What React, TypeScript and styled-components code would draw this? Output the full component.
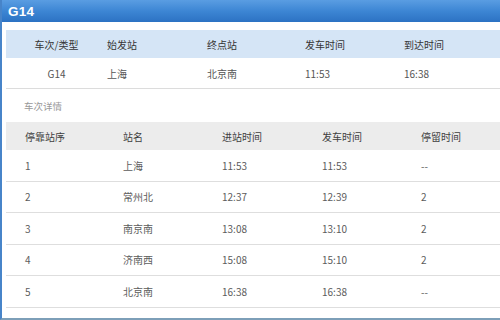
import React from 'react'
import styled, { createGlobalStyle } from 'styled-components'

const GlobalStyle = createGlobalStyle`
  html, body {
    margin: 0;
    padding: 0;
    background: #ffffff;
    overflow: hidden;
  }
  body {
    font-family: "Noto Sans CJK SC", "Noto Sans", sans-serif;
  }
`

const Panel = styled.div`
  width: 510px;
  height: 320px;
  box-sizing: border-box;
  border-left: 2px solid #4784c9;
  border-bottom: 2px solid #7d9fb8;
  display: flex;
  flex-direction: column;
`

const TitleBar = styled.div`
  height: 22px;
  display: flex;
  align-items: center;
  padding-left: 6px;
  background: linear-gradient(to bottom, #5a9de2 0%, #3d86d4 50%, #2c72c3 100%);
  color: #ffffff;
  font-family: "Liberation Sans", "DejaVu Sans", sans-serif;
  font-weight: 700;
  font-size: 13.5px;
  letter-spacing: 0.3px;
`

const Body = styled.div`
  padding: 8px 0 0 4px;
  flex: 1;
`

const SummaryRow = styled.div<{ $head?: boolean }>`
  display: grid;
  grid-template-columns: 101px 100px 98px 99px 1fr;
  align-items: center;
  box-sizing: border-box;
  height: ${p => (p.$head ? '28px' : '31px')};
  background: ${p => (p.$head ? '#d5e5f6' : '#ffffff')};
  border-bottom: ${p => (p.$head ? 'none' : '1px solid #dcdcdc')};
  font-size: 10px;
  color: ${p => (p.$head ? '#353535' : '#555555')};
`

const Cell = styled.span<{ $center?: boolean }>`
  text-align: ${p => (p.$center ? 'center' : 'left')};
  white-space: nowrap;
`

const SectionLabel = styled.div`
  font-size: 9.5px;
  color: #999999;
  padding: 10px 0 0 18px;
  height: 22px;
  box-sizing: border-box;
`

const DetailRow = styled.div<{ $head?: boolean }>`
  display: grid;
  grid-template-columns: 98px 99px 100px 99px 1fr;
  align-items: center;
  box-sizing: border-box;
  padding-left: 19px;
  height: ${p => (p.$head ? '28px' : '31.5px')};
  background: ${p => (p.$head ? '#ececec' : '#ffffff')};
  border-bottom: ${p => (p.$head ? 'none' : '1px solid #dedede')};
  font-size: 10px;
  color: ${p => (p.$head ? '#3f3f3f' : '#5c5c5c')};
  margin-top: ${p => (p.$head ? '11px' : '0')};
`

const stops = [
  { no: '1', name: '上海', arrive: '11:53', depart: '11:53', stay: '--' },
  { no: '2', name: '常州北', arrive: '12:37', depart: '12:39', stay: '2' },
  { no: '3', name: '南京南', arrive: '13:08', depart: '13:10', stay: '2' },
  { no: '4', name: '济南西', arrive: '15:08', depart: '15:10', stay: '2' },
  { no: '5', name: '北京南', arrive: '16:38', depart: '16:38', stay: '--' },
]

const App = () => {
  return (
    <>
      <GlobalStyle />
      <Panel>
        <TitleBar>G14</TitleBar>
        <Body>
          <SummaryRow $head>
            <Cell $center>车次/类型</Cell>
            <Cell>始发站</Cell>
            <Cell>终点站</Cell>
            <Cell>发车时间</Cell>
            <Cell>到达时间</Cell>
          </SummaryRow>
          <SummaryRow>
            <Cell $center>G14</Cell>
            <Cell>上海</Cell>
            <Cell>北京南</Cell>
            <Cell>11:53</Cell>
            <Cell>16:38</Cell>
          </SummaryRow>
          <SectionLabel>车次详情</SectionLabel>
          <DetailRow $head>
            <Cell>停靠站序</Cell>
            <Cell>站名</Cell>
            <Cell>进站时间</Cell>
            <Cell>发车时间</Cell>
            <Cell>停留时间</Cell>
          </DetailRow>
          {stops.map(s => (
            <DetailRow key={s.no}>
              <Cell>{s.no}</Cell>
              <Cell>{s.name}</Cell>
              <Cell>{s.arrive}</Cell>
              <Cell>{s.depart}</Cell>
              <Cell>{s.stay}</Cell>
            </DetailRow>
          ))}
        </Body>
      </Panel>
    </>
  )
}

export default App
